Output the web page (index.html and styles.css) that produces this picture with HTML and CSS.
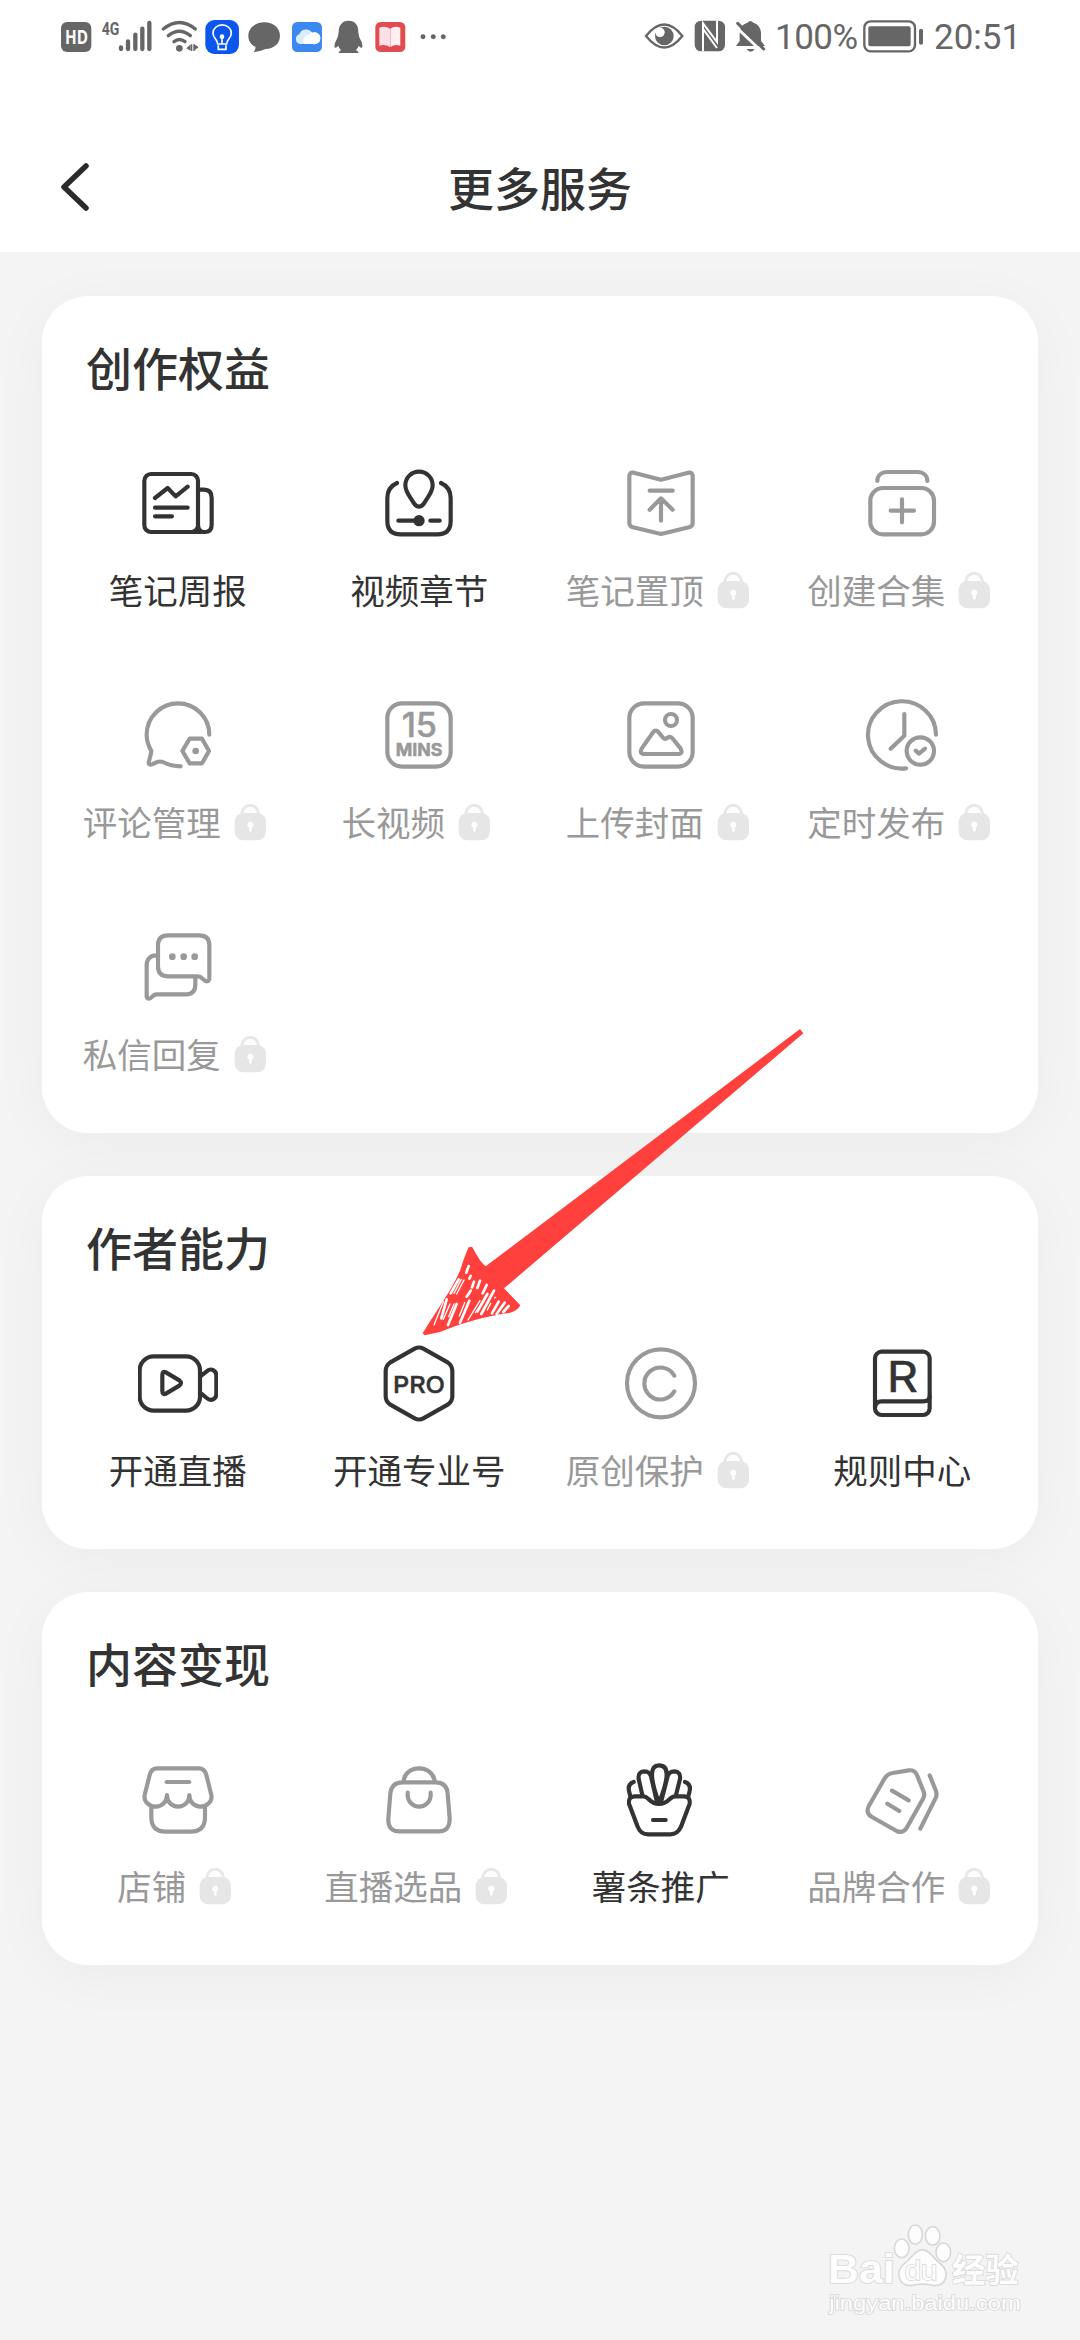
FILE: index.html
```html
<!DOCTYPE html>
<html lang="zh-CN">
<head>
<meta charset="utf-8">
<title>更多服务</title>
<link rel="stylesheet" href="styles.css">
</head>
<body>
<svg class="defs" width="0" height="0" aria-hidden="true">
  <symbol id="lock" viewBox="0 0 156 114">
    <path d="M63 36V30a24.500 23 0 0 1 49 0V36" fill="none" stroke="#e8e8e8" stroke-width="9"/>
    <rect x="41" y="30" width="94" height="82" rx="26" fill="#e6e6e6"/>
    <circle cx="88" cy="65" r="9" fill="#fff"/><path d="M88 65V82" stroke="#fff" stroke-width="8" stroke-linecap="round"/>
  </symbol>
</svg>

<header class="top">
  <div class="status">
    <div class="status-left">
      <svg width="42" height="80" viewBox="45 0 126 240"><rect x="63" y="66" width="91" height="90" rx="18" fill="#666"/><text x="75" y="132" class="hd" textLength="69" lengthAdjust="spacingAndGlyphs">HD</text></svg>
      <svg width="60" height="80" viewBox="171 0 180 240"><text x="185" y="104" class="net" textLength="53" lengthAdjust="spacingAndGlyphs">4G</text><path d="M243 142V147M264 124V147M286 104V147M307 86V147M328 69V147" class="bars"/></svg>
      <svg width="44" height="80" viewBox="351 0 132 240"><g class="wifi"><path d="M370 87Q418 48 466 87M385 107Q418 81 451 107M402 125Q418 112 435 125"/></g><circle cx="418" cy="145" r="10" fill="#666"/><path d="M452 133V152L439 145ZM462 133L476 141L462 152Z" fill="#666"/><path d="M455 133V153M462 133V153" stroke="#666" stroke-width="4"/></svg>
      <svg width="42.300" height="80" viewBox="484 0 127 240"><rect x="497" y="60" width="101" height="102" rx="27" fill="#0b57ee"/><g fill="none" stroke="#fff" stroke-width="5"><path d="M534 132C534 118 520 116 520 99A27 24 0 0 1 575 99C575 116 561 118 561 132ZM536 136V148H559V136"/><path d="M547 110V132"/></g><circle cx="547" cy="110" r="7" fill="#fff"/></svg>
      <svg width="42.300" height="80" viewBox="611 0 127 240"><path d="M675 67C702 67 722 84 722 107C722 132 703 145 679 147Q660 156 643 156Q650 147 648 140C635 134 627 123 627 107C627 84 648 67 675 67Z" fill="#666"/></svg>
      <svg width="42.300" height="80" viewBox="738 0 127 240"><rect x="756" y="66" width="90" height="90" rx="16" fill="#3c88f0"/><path d="M780 132A15 15 0 0 1 778 103A21 20 0 0 1 816 98A18 18 0 1 1 819 132Z" fill="#dcecff"/><path d="M793 132A18 18 0 0 1 807 104Q819 91 816 98A18 18 0 1 1 819 132Z" fill="#fff"/></svg>
      <svg width="42.300" height="80" viewBox="865 0 127 240"><path d="M927 62C946 62 957 76 956 96Q957 108 961 116Q970 130 968 142Q963 146 957 137Q955 145 949 150Q957 154 957 159H897Q897 154 904 150Q898 145 896 137Q889 146 884 142Q883 130 892 116Q896 108 897 96C897 76 908 62 927 62Z" fill="#666"/></svg>
      <svg width="42.300" height="80" viewBox="992 0 127 240"><rect x="1008" y="66" width="90" height="90" rx="16" fill="#e04c50"/><path d="M1020 83Q1038 76 1052 86V141Q1038 132 1020 137Z" fill="#fbe0e6"/><path d="M1083 83Q1066 76 1053 86V141Q1066 132 1083 137Z" fill="#fff0f3"/></svg>
      <svg width="42.300" height="80" viewBox="1119 0 127 240"><g fill="#666"><circle cx="1152" cy="110" r="7.500"/><circle cx="1183" cy="110" r="7.500"/><circle cx="1213" cy="110" r="7.500"/></g></svg>
    </div>
    <div class="status-right">
      <svg width="50" height="80" viewBox="57 0 150 240"><path d="M75 108Q130 39 184 108Q130 177 75 108Z" fill="none" stroke="#666" stroke-width="7"/><circle cx="130" cy="108" r="28" fill="#666"/><circle cx="117" cy="97" r="14" fill="#fff"/></svg>
      <svg width="40" height="80" viewBox="207 0 120 240"><rect x="221" y="62" width="91" height="92" rx="19" fill="#666"/><path d="M246 154V70L288 126V62M247 88L288 144" fill="none" stroke="#fff" stroke-width="6"/></svg>
      <svg width="40" height="80" viewBox="327 0 120 240"><path d="M345 138L356 123V100C356 82 365 73 379 68Q389 58 397 68C412 73 420 84 420 100V123L432 138Z" fill="#666"/><path d="M377 147H401Q389 164 377 147Z" fill="#666"/><path d="M342 78L424 156" stroke="#fff" stroke-width="9"/><path d="M350 70L428 147" stroke="#666" stroke-width="9" stroke-linecap="round"/></svg>
      <span class="battery-text">100%</span>
      <svg width="64" height="80" viewBox="723 0 192 240"><rect x="730" y="64" width="152" height="90" rx="19" fill="none" stroke="#666" stroke-width="7"/><rect x="742" y="79" width="127" height="60" rx="6" fill="#666"/><rect x="894" y="86" width="12" height="48" rx="6" fill="#666"/></svg>
      <span class="time">20:51</span>
    </div>
  </div>
  <div class="navbar">
    <svg class="back" width="34" height="50" viewBox="0 0 34 50"><path d="M29 4L7 25L29 46" fill="none" stroke="#2b2b2b" stroke-width="5.500" stroke-linecap="round" stroke-linejoin="round"/></svg>
    <h1>更多服务</h1>
  </div>
</header>

<main>
  <section class="card">
    <h2>创作权益</h2>
    <div class="grid">
      <div class="item">
        <svg class="icon" viewBox="0 0 240 240"><rect x="19" y="33" width="161" height="174" rx="20"/><path d="M182 80H198Q221 80 221 105V185Q221 207 200 207Q180 207 180 185M150 207H200M51 105L89 75L113 100L149 71M51 134H149M51 160H102"/></svg>
        <div class="label">笔记周报</div>
      </div>
      <div class="item">
        <svg class="icon" viewBox="0 0 240 240"><path d="M54 60C36 68 25 85 25 105V174Q25 214 65 214H175Q215 214 215 174V105C215 85 204 68 186 60"/><path d="M120 26C97 26 79 44 79 67C79 88 94 102 104 120Q112 131 120 131Q128 131 136 120C146 102 161 88 161 67C161 44 143 26 120 26ZM58 173H120M154 173H182"/><circle cx="120" cy="173" r="17" class="solid"/></svg>
        <div class="label">视频章节</div>
      </div>
      <div class="item locked">
        <svg class="icon" viewBox="0 0 240 240"><path d="M38 29L120 50L202 29Q215 27 215 41V180Q215 190 204 193L120 213L36 193Q25 190 25 180V41Q25 27 38 29ZM86 83H155M120 107V173M86 140L120 106L155 140"/></svg>
        <div class="label">笔记置顶<svg class="lock"><use href="#lock"/></svg></div>
      </div>
      <div class="item locked">
        <svg class="icon" viewBox="0 0 240 240"><path d="M46 54C46 38 58 27 76 27H166C184 27 196 38 196 54M120 109V178M86 143H156"/><rect x="25" y="75" width="191" height="139" rx="38"/></svg>
        <div class="label">创建合集<svg class="lock"><use href="#lock"/></svg></div>
      </div>
      <div class="item locked">
        <svg class="icon" viewBox="0 0 240 240"><path d="M214 119A94 94 0 0 0 26 119C26 140 31 152 40 168C40 180 32 195 32 204Q34 212 44 207C54 202 62 196 74 201C90 209 108 214 128 214"/><path d="M155 131H192L213 168L192 205H155L133 168Z"/><circle cx="173" cy="168" r="10" class="solid"/></svg>
        <div class="label">评论管理<svg class="lock"><use href="#lock"/></svg></div>
      </div>
      <div class="item locked">
        <svg class="icon" viewBox="0 0 240 240"><rect x="25" y="25" width="190" height="190" rx="44"/><text x="68" y="126" class="glyph fifteen" textLength="106" lengthAdjust="spacingAndGlyphs">15</text><text x="50" y="184" class="glyph mins" textLength="140" lengthAdjust="spacingAndGlyphs">MINS</text></svg>
        <div class="label">长视频<svg class="lock"><use href="#lock"/></svg></div>
      </div>
      <div class="item locked">
        <svg class="icon" viewBox="0 0 240 240"><rect x="25" y="25" width="190" height="190" rx="44"/><circle cx="150" cy="75" r="18"/><path d="M62 161L96 112Q104 102 113 112L127 129Q133 134 140 128Q148 122 156 132L179 161Q187 176 172 177H70Q54 176 62 161Z"/></svg>
        <div class="label">上传封面<svg class="lock"><use href="#lock"/></svg></div>
      </div>
      <div class="item locked">
        <svg class="icon" viewBox="0 0 240 240"><path d="M222 119A102 101 0 1 0 132 220M127 57V122L86 161"/><circle cx="175" cy="168" r="41"/><path d="M161 167L171 176L189 161"/></svg>
        <div class="label">定时发布<svg class="lock"><use href="#lock"/></svg></div>
      </div>
      <div class="item locked">
        <svg class="icon" viewBox="0 0 240 240"><path d="M214 154V55Q214 25 184 25H90Q60 25 60 55V118Q60 148 90 148H180C192 148 197 163 206 163Q214 163 214 154ZM54 85C38 85 26 97 26 113V208Q26 215 34 215C42 215 42 202 56 202H145Q172 202 172 172V152"/><g class="solid"><circle cx="103" cy="89" r="10"/><circle cx="137" cy="89" r="10"/><circle cx="170" cy="89" r="10"/></g></svg>
        <div class="label">私信回复<svg class="lock"><use href="#lock"/></svg></div>
      </div>
    </div>
  </section>

  <section class="card">
    <h2>作者能力</h2>
    <div class="grid">
      <div class="item">
        <svg class="icon" viewBox="0 0 240 240"><rect x="5" y="40" width="181" height="163" rx="42"/><path d="M73 96Q73 82 85 89L124 112Q134 120 124 128L85 151Q73 158 73 145ZM190 98L206 85Q214 78 222 80Q235 84 235 98V152Q235 166 222 170Q214 172 206 165L190 152"/></svg>
        <div class="label">开通直播</div>
      </div>
      <div class="item">
        <svg class="icon" viewBox="0 0 240 240"><path d="M107 17Q120 10 133 17L206 58Q220 68 220 84V160Q220 176 206 185L133 226Q120 233 107 226L34 185Q20 176 20 160V84Q20 68 34 58Z"/><text x="42" y="149" class="glyph pro" textLength="156" lengthAdjust="spacingAndGlyphs">PRO</text></svg>
        <div class="label">开通专业号</div>
      </div>
      <div class="item locked">
        <svg class="icon" viewBox="0 0 240 240"><circle cx="120" cy="121" r="102"/><path d="M160 98A48 48 0 1 0 160 145"/></svg>
        <div class="label">原创保护<svg class="lock"><use href="#lock"/></svg></div>
      </div>
      <div class="item">
        <svg class="icon" viewBox="0 0 240 240"><rect x="39" y="26" width="164" height="190" rx="20"/><path d="M39 195Q39 175 59 175H183Q203 175 203 160"/><text x="74" y="148" class="glyph book-r" textLength="94" lengthAdjust="spacingAndGlyphs">R</text></svg>
        <div class="label">规则中心</div>
      </div>
    </div>
  </section>

  <section class="card">
    <h2>内容变现</h2>
    <div class="grid">
      <div class="item locked">
        <svg class="icon" viewBox="0 0 240 240"><path d="M58 28Q40 28 35 48L20 108C16 128 34 143 53 143C70 143 87 130 87 108C87 130 102 143 120 143C138 143 154 130 154 108C154 130 170 143 187 143C206 143 224 128 220 108L205 48Q200 28 182 28ZM86 69H154M40 145V175Q40 218 83 218H158Q201 218 201 175V145"/></svg>
        <div class="label">店铺<svg class="lock"><use href="#lock"/></svg></div>
      </div>
      <div class="item locked">
        <svg class="icon" viewBox="0 0 240 240"><path d="M74 66C76 44 95 28 120 28C145 28 164 44 167 66M72 70H168Q204 70 206 104L212 178Q213 217 179 217H61Q26 217 28 178L34 104Q37 70 72 70ZM86 101V109A34.500 34 0 0 0 155 109V101"/></svg>
        <div class="label">直播选品<svg class="lock"><use href="#lock"/></svg></div>
      </div>
      <div class="item">
        <svg class="icon" viewBox="0 0 240 240"><path d="M40 112H68C84 112 84 135 114 135C144 135 144 112 162 112H190Q209 114 206 134L180 203Q170 226 148 226H82Q58 226 50 203L24 134Q21 114 40 112ZM96 183H134"/><path d="M114 132C104 105 93 75 93 46Q93 19 114 19Q137 19 137 46C137 75 124 105 114 132M64 108L53 60Q50 38 70 37Q86 37 90 52L108 130M165 108L177 60Q180 38 160 37Q144 37 140 52L120 130M38 69Q18 76 25 100L28 112M192 69Q212 76 205 100L202 112"/></svg>
        <div class="label">薯条推广</div>
      </div>
      <div class="item locked">
        <svg class="icon" viewBox="0 0 240 240"><path d="M68 58Q77 44 92 42L140 34Q157 32 164 46L185 98Q189 108 184 118L135 205Q124 225 104 216L30 174Q10 162 20 142ZM203 49L222 96Q226 108 220 119L175 209M90 95L140 124M76 134L112 156"/></svg>
        <div class="label">品牌合作<svg class="lock"><use href="#lock"/></svg></div>
      </div>
    </div>
  </section>
</main>

<svg class="arrow" viewBox="0 0 1260 1020">
  <path d="M1200 57L1210 70L312 835L361 886Q352 903 330 908C250 920 180 940 120 966L74 976L68 970C110 900 155 840 180 782Q195 735 206 712L216 710C228 730 240 755 257 769Z" fill="#ff403c"/>
  <g stroke="#fff" stroke-linecap="round" fill="none">
    <path stroke-width="8" d="M206 768L199 788M212 798L208 806M240 812L232 834M222 815L216 832M212 842L200 860M260 825L248 850M176 808L152 850M282 842L244 912M262 852L232 905M140 868L124 925M170 882L144 945M208 872L180 938M296 875L276 910M314 878L290 912M326 888L310 906"/>
    <path stroke-width="4" d="M192 810L170 852M184 808L162 850M130 875L102 945M150 882L130 928M162 882L146 920M194 878L178 918M240 872L204 930M246 880L226 908M272 880L262 900M286 862L284 864"/>
  </g>
</svg>

<svg class="watermark" viewBox="0 0 840 420">
  <g fill="#fdfdfd" stroke="#d8d8d8" stroke-width="5">
    <text x="84" y="250" class="wm-bai" textLength="200" lengthAdjust="spacingAndGlyphs">Bai</text>
    <ellipse cx="305" cy="145" rx="22" ry="28"/><ellipse cx="346" cy="104" rx="21" ry="29"/><ellipse cx="398" cy="108" rx="22" ry="28"/><ellipse cx="430" cy="157" rx="22" ry="28"/>
    <path d="M367 149C390 149 400 177 422 192C450 216 440 256 404 257Q367 248 332 257C294 257 286 216 312 192C334 177 345 149 367 149Z"/>
    <text x="314" y="240" class="wm-du" textLength="98" lengthAdjust="spacingAndGlyphs">du</text>
    <text x="456" y="245" class="wm-cn" textLength="200" lengthAdjust="spacingAndGlyphs">经验</text>
    <text x="88" y="330" class="wm-url" textLength="574" lengthAdjust="spacingAndGlyphs">jingyan.baidu.com</text>
  </g>
</svg>
</body>
</html>
```

FILE: styles.css
```css
* { box-sizing: border-box; }
body {
  margin: 0;
  position: relative;
  width: 1080px;
  height: 2340px;
  display: flex;
  flex-direction: column;
  overflow: hidden;
  background: #f4f4f4;
  color: #333;
  font-family: "Noto Sans CJK SC", sans-serif;
}
svg { display: block; flex: none; }
.defs { position: absolute; }

.top { height: 252px; background: #fff; }
.status {
  height: 80px;
  padding: 0 66px 0 55px;
  display: flex;
  justify-content: space-between;
}
.status-left, .status-right { display: flex; align-items: center; }
.status-right {
  color: #666;
  font: 400 35px/76px Roboto, sans-serif;
}
.battery-text { width: 92px; height: 80px; padding-left: 5px; letter-spacing: -.5px; white-space: nowrap; }
.time { width: 80px; height: 80px; margin-left: 8px; white-space: nowrap; }
.hd { font: 700 56px "Open Sans", sans-serif; fill: #fff; }
.net { font: 700 56px Roboto, sans-serif; fill: #666; }
.bars { stroke: #666; stroke-width: 13; stroke-linecap: round; }
.wifi { fill: none; stroke: #666; stroke-width: 10; stroke-linecap: round; }

.navbar {
  height: 172px;
  padding: 0 57px;
  display: grid;
  grid-template-columns: 34px 1fr 34px;
  align-items: start;
}
.back { margin-top: 82px; }
h1 {
  margin: 76px 0 0;
  text-align: center;
  font-size: 46px;
  line-height: 60px;
  font-weight: 500;
}

main {
  position: relative;
  isolation: isolate;
  overflow: hidden;
  flex: 1;
  padding: 44px 42px 0;
  display: flex;
  flex-direction: column;
  gap: 43px;
}
.card {
  position: relative;
  padding: 40px 15px 57px;
  border-radius: 46px;
  background: #fff;
}
.card::before {
  content: "";
  position: absolute;
  inset: 0;
  z-index: -1;
  border-radius: 46px;
  box-shadow: 0 10px 60px rgba(0, 0, 0, .04);
}
h2 {
  margin: 0 0 67px;
  padding-left: 29px;
  font-size: 46px;
  line-height: 60px;
  font-weight: 500;
}
.grid {
  display: grid;
  grid-template-columns: repeat(4, 1fr);
  row-gap: 83px;
}
.item { display: flex; flex-direction: column; align-items: center; gap: 23px; }
.icon {
  width: 80px;
  height: 80px;
  fill: none;
  stroke: currentColor;
  stroke-width: 12.5;
  stroke-linecap: round;
  stroke-linejoin: round;
}
.solid { fill: currentColor; stroke: none; }
.locked { color: #999; }
.label {
  display: flex;
  align-items: center;
  height: 46px;
  font-size: 34.5px;
  line-height: 46px;
  white-space: nowrap;
}
.lock { width: 52px; height: 38px; margin-top: 2px; }

.glyph { fill: currentColor; stroke-width: 1.5; font-family: Inter, sans-serif; }
.fifteen { font-size: 100px; font-weight: 500; }
.mins { font-size: 52px; font-weight: 700; }
.pro { font-size: 70px; font-weight: 500; }
.book-r { font-size: 126px; font-weight: 400; }

.arrow { position: absolute; left: 400px; top: 1010px; width: 420px; height: 340px; z-index: 2; }
.watermark { position: absolute; left: 800px; top: 2200px; width: 280px; height: 140px; }
.watermark text { paint-order: stroke; }
.wm-bai { font: 700 120px "Liberation Sans", sans-serif; }
.wm-du { font: 400 84px "Liberation Sans", sans-serif; }
.wm-cn { font: 700 100px "Noto Sans CJK SC", sans-serif; }
.wm-url { font: 400 60px "Liberation Sans", sans-serif; }
```
